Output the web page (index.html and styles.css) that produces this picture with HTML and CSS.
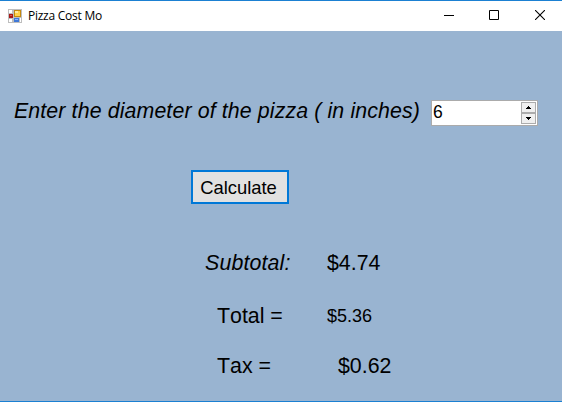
FILE: index.html
```html
<!DOCTYPE html>
<html lang="en">
<head>
<meta charset="utf-8">
<title>Pizza Cost Mo</title>
<link rel="stylesheet" href="styles.css">
</head>
<body>
<div class="window">
  <header class="titlebar">
    <svg class="app-icon" width="14" height="14" viewBox="0 0 14 14" shape-rendering="crispEdges">
      <path fill="#bebebe" d="M0 0h14v14H0z"/>
      <path fill="#fff" d="M1 1h3v3H1zM1 10h3v3H1z"/>
      <path fill="#a81818" d="M1 5h4v4H1z"/>
      <path fill="#e05848" d="M2 6h2v1H2z"/>
      <path fill="#c48a10" d="M6 1h7v7H6z"/>
      <path fill="#ffd34a" d="M7 2h5v5H7z"/>
      <path fill="#ffeaa0" d="M7 2h3v2H7z"/>
      <path fill="#3f78d8" d="M6 9h5v4H6z"/>
      <path fill="#8ab8ff" d="M7 10h3v1H7z"/>
      <path fill="#fff" d="M12 9h1v4h-1z"/>
    </svg>
    <span class="title">Pizza Cost Mo</span>
    <div class="controls">
      <svg width="10" height="10" viewBox="0 0 10 10"><path d="M0 5.5h10" stroke="#000"/></svg>
      <svg width="10" height="10" viewBox="0 0 10 10"><path d="M.5.5h9v9h-9z" fill="none" stroke="#000"/></svg>
      <svg class="close" width="10" height="10" viewBox="0 0 10 10"><path d="M0 0l10 10M10 0L0 10" stroke="#000" stroke-width="1.1"/></svg>
    </div>
  </header>
  <main class="form">
    <div class="entry">
      <label class="prompt" for="diameter">Enter the diameter of the pizza ( in inches)</label>
      <div class="spinner">
        <input class="value" id="diameter" type="text" value="6">
        <div class="arrows">
          <span class="arrow"><svg width="5" height="3" viewBox="0 0 5 3" shape-rendering="crispEdges"><path d="M2 0h1v1h1v1h1v1H0V2h1V1h1z"/></svg></span>
          <span class="arrow"><svg width="5" height="3" viewBox="0 0 5 3" shape-rendering="crispEdges"><path d="M0 0h5v1H4v1H3v1H2V2H1V1H0z"/></svg></span>
        </div>
      </div>
    </div>
    <button class="calculate" type="button">Calculate</button>
    <div class="results">
      <span class="name subtotal">Subtotal:</span><span class="amount">$4.74</span>
      <span class="name">Total =</span><span class="amount small">$5.36</span>
      <span class="name">Tax =</span><span class="amount tax">$0.62</span>
    </div>
  </main>
</div>
</body>
</html>
```
FILE: styles.css
```css
* {
  box-sizing: border-box;
}

body {
  margin: 0;
  font-family: "Liberation Sans", Arial, sans-serif;
  color: #000;
}

.window {
  display: flex;
  flex-direction: column;
  width: 562px;
  height: 402px;
  background: #99b4d1;
  border-top: 1px solid #1b80d2;
  border-bottom: 1px solid #1b80d2;
  overflow: hidden;
}

svg {
  display: block;
}

.titlebar {
  display: flex;
  align-items: center;
  flex: none;
  height: 30px;
  padding: 0 17px 0 8px;
  background: #fff;
}

.title {
  margin: 0 0 0 6px;
  font: 12px/16px "Open Sans", "Noto Sans", sans-serif;
  letter-spacing: -0.25px;
}

.controls {
  display: flex;
  gap: 35px;
  margin-left: auto;
  margin-top: -2px;
}

.close {
  margin-left: 1px;
}

.form {
  flex: 1;
  padding-top: 68px;
  font-size: 21.33px;
  line-height: 24px;
  white-space: nowrap;
  font-kerning: none;
}

.entry {
  display: flex;
  align-items: flex-start;
  height: 27px;
}

.prompt {
  width: 417px;
  margin-left: 14px;
  font-style: italic;
  letter-spacing: 0.12px;
}

.spinner {
  display: flex;
  width: 107px;
  height: 26px;
  margin-top: 1px;
  padding: 1px;
  background: #fff;
  border: 1px solid #ababab;
}

.value {
  flex: 1;
  min-width: 0;
  height: 21px;
  padding: 0;
  border: 0;
  outline: 0;
  background: none;
  font: 17.5px/21px "Liberation Sans", Arial, sans-serif;
}

.arrows {
  display: flex;
  flex-direction: column;
  width: 15px;
}

.arrow {
  display: flex;
  flex: 1;
  align-items: center;
  justify-content: center;
  background: #f0f0f0;
  border: 1px solid #acacac;
}

.calculate {
  display: block;
  width: 98px;
  height: 34px;
  margin: 44px 0 0 191px;
  padding: 1px 3px 0 0;
  background: #e1e1e1;
  border: 2px solid #0078d7;
  font: 18.4px/30px "Liberation Sans", Arial, sans-serif;
  color: #000;
}

.results {
  display: grid;
  grid-template-columns: 110px auto;
  grid-template-rows: 53px 50px 24px;
  justify-content: start;
  margin: 47px 0 0 217px;
}

.subtotal {
  margin-left: -12px;
  font-style: italic;
  letter-spacing: 0.15px;
}

.small {
  font-size: 18px;
}

.tax {
  margin-left: 11px;
}
```
